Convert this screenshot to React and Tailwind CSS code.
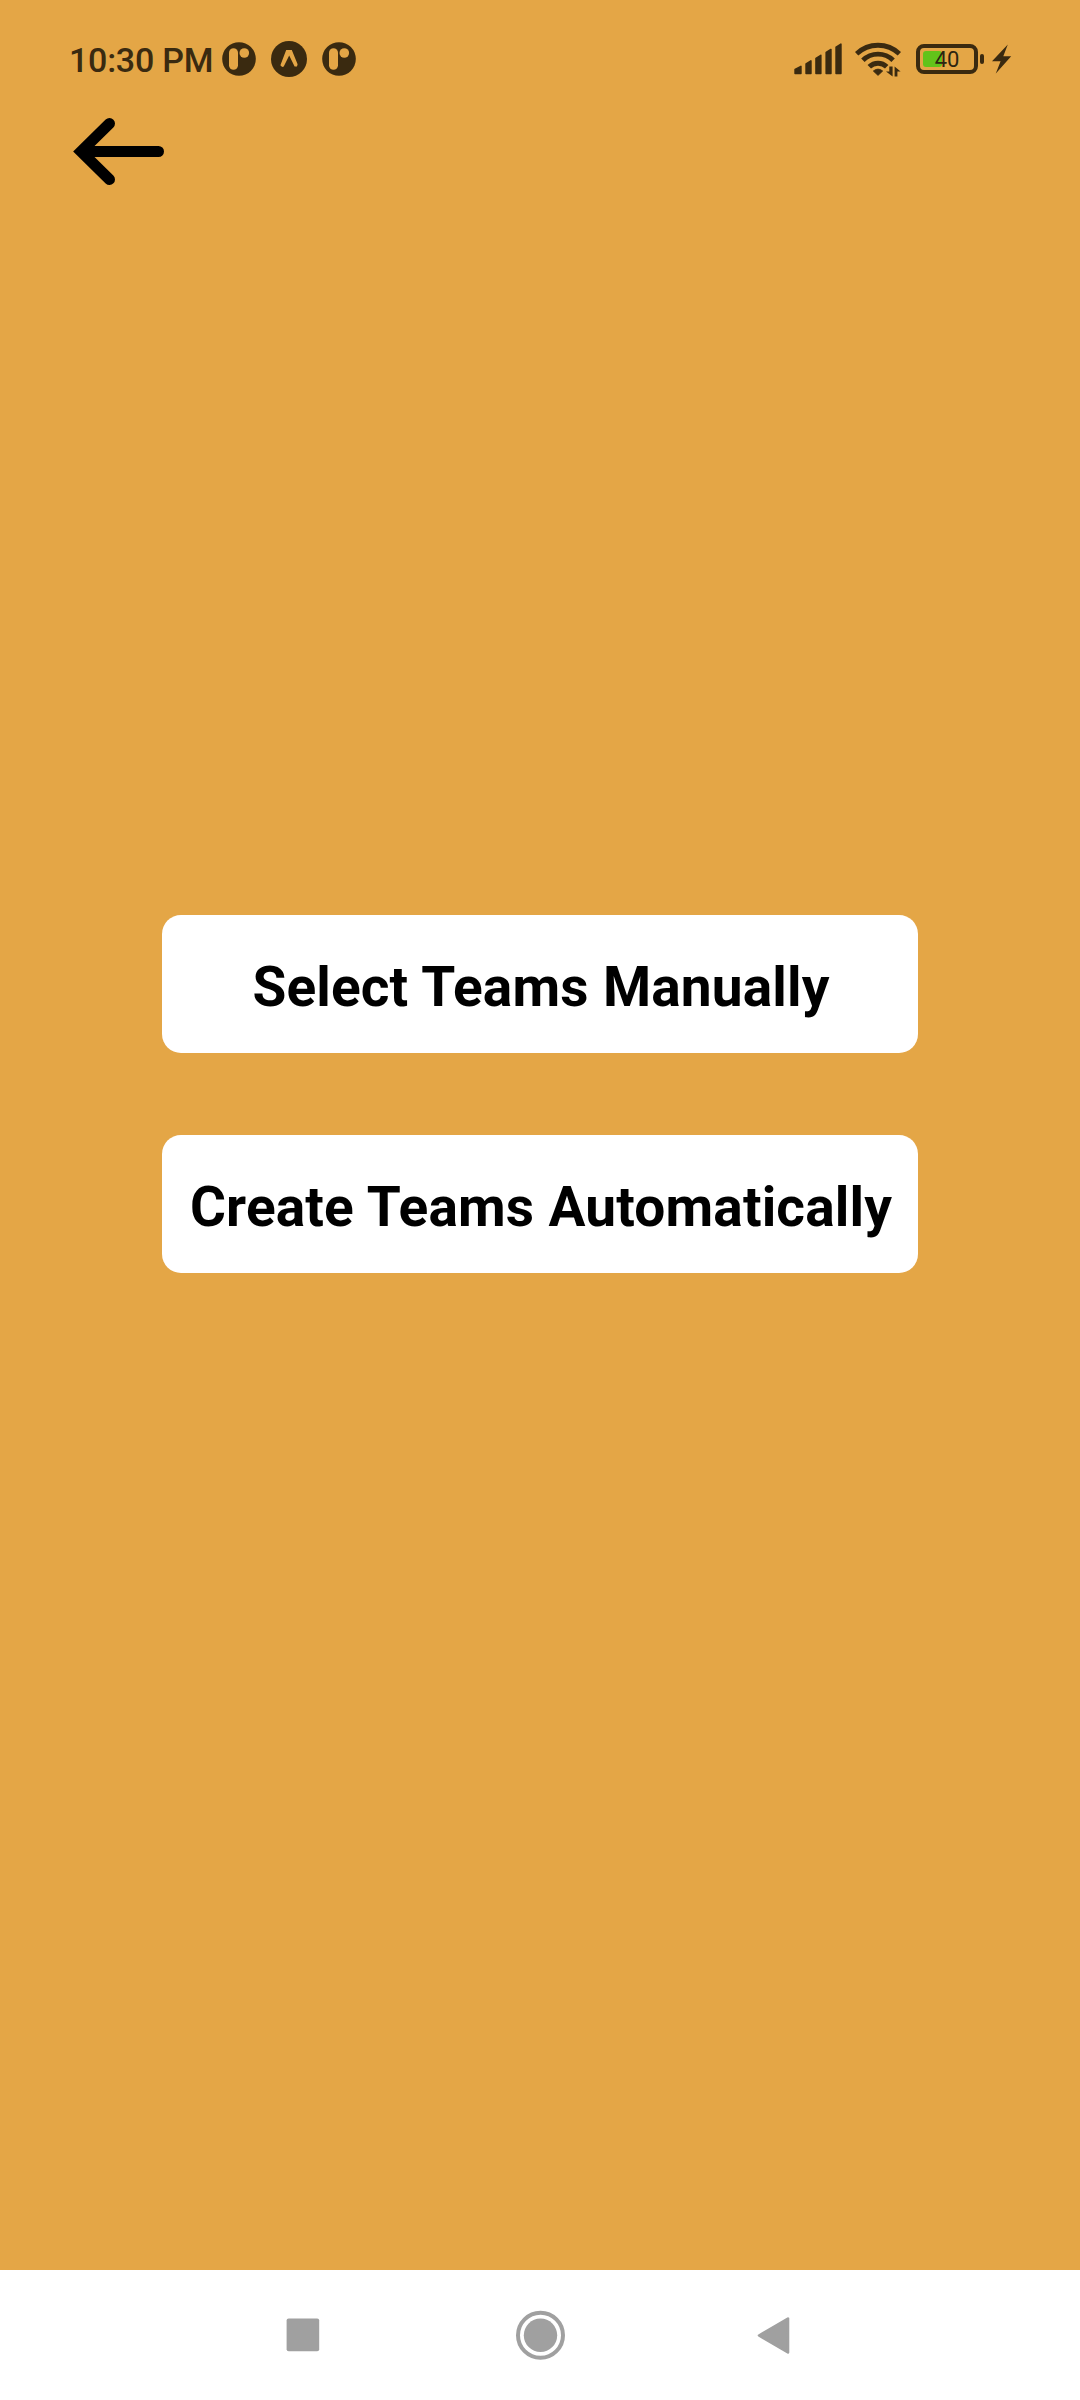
const INK = '#3a2a10';
const BG = '#e4a646';

function PillIcon({ className }) {
  return (
    <svg className={className} width="34" height="34" viewBox="0 0 34 34">
      <circle cx="17" cy="17" r="16.8" fill={INK} />
      <rect x="7" y="6.3" width="9" height="21.4" rx="4.5" fill={BG} />
      <circle cx="22.3" cy="11" r="4.8" fill={BG} />
    </svg>
  );
}

function ChevronBadge({ className }) {
  return (
    <svg className={className} width="36" height="36" viewBox="0 0 36 36">
      <circle cx="18" cy="18" r="18" fill={INK} />
      <path
        d="M15.2 9 H20.8 L26.6 23.2 L26 25.4 L23.6 25.6 L18.2 14.6 L13 25 Q12.2 26.4 10.6 25.6 L9.4 24.2 Z"
        fill={BG}
      />
    </svg>
  );
}

function SignalIcon({ className }) {
  return (
    <svg className={className} width="48" height="32" viewBox="0 0 48 32" fill={INK} stroke={INK} strokeWidth="1.6" strokeLinejoin="round">
      <path d="M1.1 26.4 L6.9 23.4 V30.4 H1.1 Z" />
      <path d="M12.1 20.9 L16.9 17.9 V30.4 H12.1 Z" />
      <path d="M22 15.4 L26.8 12.3 V30.4 H22 Z" />
      <path d="M32.2 9.4 L36.9 6.5 V30.4 H32.2 Z" />
      <path d="M42.1 4.2 L46.9 1.2 V30.4 H42.1 Z" />
    </svg>
  );
}

function WifiIcon({ className }) {
  return (
    <svg className={className} width="46" height="36" viewBox="0 0 46 36">
      <g fill="none" stroke={INK} strokeWidth="4.9">
        <path d="M1.6 12.8 A31 31 0 0 1 44.4 12.8" />
        <path d="M7.9 19.3 A21.6 21.6 0 0 1 38.1 19.3" />
        <path d="M14.3 25.8 A12.4 12.4 0 0 1 31.7 25.8" />
      </g>
      <path d="M18.3 30 Q23 26.2 27.7 30 L23 34.4 Z" fill={INK} stroke={INK} strokeWidth="0.8" strokeLinejoin="round" />
      <path d="M34.3 25.4 H37.6 V35.4 L31 30.6 H34.3 Z" fill={INK} />
      <path d="M39.6 25.6 L45.6 30.6 H42.4 V35.4 H39.6 Z" fill={INK} />
    </svg>
  );
}

function Battery({ level, className }) {
  return (
    <div className={`flex items-center ${className}`}>
      <div className="relative h-[30px] w-[62px] rounded-[8px] border-[4px] border-[#3a2a10] p-[3px]">
        <div className="h-full rounded-[3px] bg-[#62c31a]" style={{ width: `${level}%` }} />
        <span className="absolute inset-0 flex items-center justify-center font-['Roboto',sans-serif] text-[22px] leading-none text-[#2c2410]">
          <span className="translate-y-[1px]">{level}</span>
        </span>
      </div>
      <div className="ml-[2px] h-[10px] w-[4px] rounded-[2px] bg-[#3a2a10]" />
    </div>
  );
}

function BoltIcon({ className }) {
  return (
    <svg className={className} width="20" height="30" viewBox="0 0 20 30">
      <path d="M15.8 0.5 L0 17.2 H8.6 L3.8 29.5 L19.2 12.2 H11.3 Z" fill={INK} />
    </svg>
  );
}

function StatusBar() {
  return (
    <div className="flex h-[118px] items-center pl-[69px] pr-[68px]">
      <span className="w-[153px] whitespace-nowrap font-['Roboto',sans-serif] text-[34px] font-medium leading-none tracking-[-0.25px] text-[#3a2a10]">
        <span className="relative top-[1px]">10:30 PM</span>
      </span>
      <PillIcon />
      <ChevronBadge className="ml-[15px]" />
      <PillIcon className="ml-[15px]" />
      <SignalIcon className="ml-auto" />
      <WifiIcon className="ml-[13px]" />
      <Battery level={40} className="ml-[15px]" />
      <BoltIcon className="ml-[8px]" />
    </div>
  );
}

function ActionButton({ children }) {
  return (
    <button className="flex h-[138px] w-[756px] items-center justify-center whitespace-nowrap rounded-[19px] bg-white font-['Roboto',sans-serif] text-[55px] font-bold leading-none tracking-[0.15px] text-black">
      <span className="relative left-[1px] top-[3px] [word-spacing:0.5px]">{children}</span>
    </button>
  );
}

function NavBar() {
  return (
    <nav className="flex h-[130px] items-center bg-white pl-[286px] text-[#a0a0a0]">
      <svg width="34" height="34" viewBox="0 0 34 34">
        <rect x="0.6" y="0.6" width="32.6" height="32.6" rx="2" fill="currentColor" />
      </svg>
      <svg className="ml-[195px]" width="50" height="50" viewBox="0 0 50 50">
        <circle cx="25.5" cy="25.3" r="22.5" fill="none" stroke="currentColor" strokeWidth="4" />
        <circle cx="25.5" cy="25.3" r="16.7" fill="currentColor" />
      </svg>
      <svg className="ml-[192px]" width="34" height="40" viewBox="0 0 34 40">
        <path
          d="M2 20.5 L31 3.5 V37.5 Z"
          fill="currentColor"
          stroke="currentColor"
          strokeWidth="2.6"
          strokeLinejoin="round"
        />
      </svg>
    </nav>
  );
}

export default function App() {
  return (
    <div className="flex h-[2400px] w-[1080px] flex-col bg-[#e4a646]">
      <StatusBar />
      <header className="flex h-[67px] pl-[73px]">
        <button aria-label="Back">
          <svg width="92" height="67" viewBox="0 0 92 67">
            <path d="M36.5 5.5 L8 33.5 L36.5 61.5 M12 33.5 H85.5" fill="none" stroke="#000" strokeWidth="11" strokeLinecap="round" />
          </svg>
        </button>
      </header>
      <main className="flex flex-1 flex-col items-center gap-[82px] pt-[730px]">
        <ActionButton>Select Teams Manually</ActionButton>
        <ActionButton>Create Teams Automatically</ActionButton>
      </main>
      <NavBar />
    </div>
  );
}
